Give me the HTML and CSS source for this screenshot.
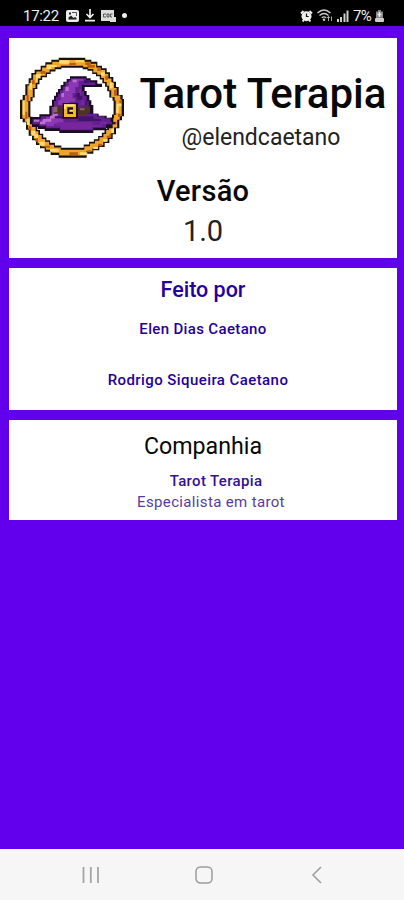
FILE: index.html
```html
<!doctype html>
<html lang="pt-BR">
	<head>
		<meta charset="utf-8" />
		<title>Tarot Terapia</title>
		<meta name="viewport" content="width=device-width,initial-scale=1.0" />
		<link rel="stylesheet" href="styles.css">
	</head>
	<body>
		<div class="status">
			<div class="status-left">
				<span class="time">17:22</span>
				<svg width="13" height="12" viewBox="0 0 13 12"><rect width="13" height="12" rx="2" fill="#eee"/><path d="M2.5 9.5V7.5L5 5.5L7.5 8L9 7L10.5 8V9.5Z" fill="#222"/><rect x="3" y="2.5" width="2" height="2" fill="#222"/><path d="M6 2.5H10.5V6" fill="none" stroke="#555"/></svg>
				<svg width="10" height="13" viewBox="0 0 10 13"><path d="M5 0V8M1.5 5L5 8.5L8.5 5M0 11.7H10" fill="none" stroke="#eee" stroke-width="1.7"/></svg>
				<svg width="15" height="12" viewBox="0 0 15 12"><path d="M0 0H13V7H15V12H9V11H0Z" fill="#ddd"/><path d="M5 4H2.5V7H5M6 4V7H8V4ZM11.5 4H9.5V7H11" fill="none" stroke="#555"/></svg>
				<span class="dot"></span>
			</div>
			<div class="status-right">
				<svg width="13" height="12" viewBox="0 0 13 12"><path d="M1 3.5L3.5 1M12 3.5L9.5 1M2.5 11.5L4 10M10.5 11.5L9 10" stroke="#eee" stroke-width="1.8"/><circle cx="6.5" cy="6.3" r="5" fill="#eee"/><path d="M6.5 3.5V6.5H8.7" fill="none" stroke="#111" stroke-width="1.2"/></svg>
				<svg width="16" height="13" viewBox="0 0 16 13"><path d="M0.5 4Q7 -2 13.5 4M2.5 6.5Q7 2.5 11.5 6.5M4.8 8.7Q7 7 9.2 8.7" fill="none" stroke="#ccc" stroke-width="1.4"/><circle cx="7" cy="10.7" r="1.2" fill="#ccc"/><path d="M11.5 12V7.5M9.8 9.2L11.5 7.3L13 9M14.5 7.5V12" fill="none" stroke="#aaa"/></svg>
				<svg width="12" height="12" viewBox="0 0 12 12"><path d="M1 12V9M4 12V7M7.5 12V3.5M10.5 12V0.5" stroke="#ccc" stroke-width="2"/></svg>
				<span class="battery">7%</span>
				<svg width="9" height="12" viewBox="0 0 9 12"><path d="M3 0H6V1.5H8V8H1V1.5H3Z" fill="#888"/><path d="M4.5 2V7M2.5 4.5H6.5" fill="none" stroke="#eee" stroke-width="1.4"/><rect x="0" y="8" width="9" height="4" rx="1" fill="#ccc"/></svg>
			</div>
		</div>
		<main class="content">
			<section class="card about">
				<div class="brand">
					<svg class="logo" width="104" height="102" viewBox="30 36 312 306">
						<defs>
							<path id="ring" d="M146 38H226V44H244V50H262V62H276V70H290V82H300V96H310V110H318V126H326V150H338V162H342V214H336V226H328V250H318V268H308V282H298V294H284V306H268V316H250V326H230V338H146V330H122V320H104V310H90V300H78V286H66V272H56V254H48V232H38V222H30V164H38V150H46V118H56V100H64V84H74V74H92V62H106V52H124V44H146Z"/>
						</defs>
						<!-- anel -->
						<use href="#ring" fill="#17100d"/>
						<use href="#ring" fill="#eda52f" transform="translate(186 188) scale(.955) translate(-186 -188)"/>
						<path fill="#ffdc72" d="M148 46H178V56H148ZM196 46H222V52H196ZM110 60H140V66H124V72H110ZM78 88H94V100H84V110H78ZM58 114H66V134H58ZM38 168H44V210H38ZM50 222H58V240H50ZM64 258H76V268H84V280H74V272H64ZM88 290H104V302H88ZM120 312H146V320H120ZM210 322H232V330H210ZM250 306H264V312H250ZM280 282H292V290H280ZM304 250H312V264H304ZM320 176H334V184H326V204H318ZM300 112H308V130H300ZM272 82H284V92H272Z"/>
						<path fill="#bd5b19" d="M178 54H198V60H178ZM226 52H242V60H254V68H232V60H226ZM262 70H272V78H262ZM286 92H294V104H286ZM312 134H320V152H312ZM328 166H334V174H328ZM324 206H332V216H324ZM308 230H320V238H308ZM298 266H304V278H290V272H298ZM264 296H276V304H264ZM232 316H244V322H232ZM178 322H204V330H178ZM104 302H120V308H104ZM76 280H84V290H76ZM56 244H64V256H56ZM46 200H52V222H46ZM50 150H56V170H50ZM66 106H74V118H66ZM92 78H106V86H92Z"/>
						<use href="#ring" fill="#17100d" transform="translate(186 188) scale(.84) translate(-186 -188)"/>
						<use href="#ring" fill="#fff" transform="translate(186 188) scale(.8) translate(-186 -188)"/>
						<!-- chapéu -->
						<path fill="#1b0b23" d="M180 94H230V100H242V106H262V116H276V126H224V138H230V150H238V166H244V180H250V206H266V212H290V218H310V232H316V238H308V250H288V256H250V264H148V258H104V252H84V246H66V238H60V216H88V208H118V182H126V164H132V152H138V142H144V132H152V120H160V110H170V102H180Z"/>
						<path fill="#61208d" d="M182 100H228V106H240V112H256V120H216V138H222V152H230V168H236V206H262V214H284V220H302V230H306V238H288V248H250V256H150V250H108V244H88V238H68V222H92V214H124V186H132V168H138V156H144V146H150V136H158V124H166V112H176V106H182Z"/>
						<path fill="#8c38b4" d="M184 102H220V108H206V126H196V144H188V160H196V170H178V180H144V166H152V150H160V136H168V122H176V110H184ZM124 210H140V220H160V236H132V244H110V238H92V226H108V216H124Z"/>
						<path fill="#bd70d2" d="M188 104H200V112H188ZM166 126H176V138H166ZM154 144H162V156H154ZM134 184H144V212H136V220H124V230H106V238H90V230H98V222H120V212H128V186H134ZM72 224H88V230H72Z"/>
						<path fill="#7825a0" d="M142 232H248V240H270V230H292V238H276V246H246V252H152V244H136V238H142ZM206 132H214V156H206ZM212 166H222V180H212Z"/>
						<path fill="#421467" d="M222 106H238V114H222ZM200 144H210V152H216V164H202V156H196V150H200ZM226 168H232V182H226ZM134 214H250V222H272V228H204V222H154V220H134Z"/>
						<path fill="#4f302b" d="M130 184H154V190H216V184H240V204H232V210H154V206H130Z"/>
						<path fill="#8b6660" d="M130 186H142V202H130ZM210 190H224V196H210Z"/>
						<path fill="#21120e" d="M158 174H204V220H158Z"/>
						<path fill="#f1b72d" fill-rule="evenodd" d="M162 178H198V216H162ZM172 187V207H189V187Z"/>
						<path fill="#ffe477" d="M162 178H194V184H168V192H162ZM178 194H189V200H178Z"/>
					</svg>
					<div class="brand-text">
						<h1 class="title">Tarot Terapia</h1>
						<p class="handle">@elendcaetano</p>
					</div>
				</div>
				<h2 class="version-label">Versão</h2>
				<p class="version">1.0</p>
			</section>
			<section class="card authors">
				<h2 class="authors-label">Feito por</h2>
				<p class="name name-elen">Elen Dias Caetano</p>
				<p class="name name-rodrigo">Rodrigo Siqueira Caetano</p>
			</section>
			<section class="card company">
				<h2 class="company-label">Companhia</h2>
				<p class="name company-name">Tarot Terapia</p>
				<p class="company-text">Especialista em tarot</p>
			</section>
		</main>
		<nav class="navbar">
			<svg width="18" height="18" viewBox="0 0 18 18"><path d="M1.5 1V17M8.8 1V17M16 1V17" stroke="#a5a5a5" stroke-width="1.8"/></svg>
			<svg width="18" height="18" viewBox="0 0 18 18"><rect x="1" y="1" width="16" height="16" rx="4.5" fill="none" stroke="#9c9c9c" stroke-width="1.5"/></svg>
			<svg width="18" height="18" viewBox="0 0 18 18"><path d="M13 1L5 9L13 17" fill="none" stroke="#9c9c9c" stroke-width="1.5"/></svg>
		</nav>
	</body>
</html>
```
FILE: styles.css
```css
*{
	margin:0;
	padding:0;
	box-sizing:border-box;
}
body{
	display:flex;
	flex-direction:column;
	width:404px;
	height:900px;
	overflow:hidden;
	background-color:#6200ee;
	font-family:Roboto,"Liberation Sans",sans-serif;
	color:#080808;
}
svg{
	display:block;
	flex:none;
}
h1,h2{
	font-weight:500;
}
.status{
	display:flex;
	justify-content:space-between;
	height:26px;
	padding:5px 20px 0 23px;
	background-color:#000;
	color:#eee;
}
.status-left,.status-right{
	display:flex;
	align-items:center;
	height:21px;
}
.status-left{
	gap:6px;
}
.status-right{
	gap:4px;
}
.time{
	width:37px;
	font-size:15px;
	letter-spacing:-0.3px;
}
.battery{
	width:18px;
	font-size:15px;
	letter-spacing:-0.8px;
}
.dot{
	width:5px;
	height:5px;
	border-radius:50%;
	background-color:#eee;
}
.content{
	flex:1;
	display:flex;
	flex-direction:column;
	gap:10px;
	padding:12px 7px 0 9px;
}
.card{
	background-color:#fff;
	text-align:center;
}
.about{
	height:220px;
	padding-top:19px;
}
.brand{
	display:flex;
	padding-left:11px;
}
.brand-text{
	width:276px;
}
.title{
	padding:11px 0 0 5px;
	font-size:42px;
	line-height:52px;
	white-space:nowrap;
}
.handle{
	padding:1px 0 0 1px;
	font-size:23px;
	line-height:34px;
	color:#222;
}
.version-label{
	margin-top:12px;
	font-size:29px;
	line-height:40px;
	letter-spacing:0.3px;
}
.version{
	font-size:29px;
	line-height:40px;
	color:#222;
}
.authors{
	height:142px;
	padding-top:7px;
	color:#25009c;
}
.authors-label{
	font-size:21.5px;
	line-height:30px;
}
.name{
	font-size:15px;
	font-weight:500;
	line-height:20px;
	letter-spacing:0.35px;
}
.name-elen{
	margin-top:14px;
}
.name-rodrigo{
	margin-top:31px;
	padding-right:10px;
	letter-spacing:0.42px;
}
.company{
	height:100px;
	padding-top:10px;
}
.company-label{
	font-size:23.2px;
	font-weight:400;
	line-height:32px;
}
.company-name{
	margin-top:9px;
	padding-left:26px;
	color:#35109a;
}
.company-text{
	padding-left:16px;
	font-size:15px;
	line-height:22px;
	letter-spacing:0.35px;
	color:#583b9e;
}
.navbar{
	display:flex;
	justify-content:space-between;
	height:51px;
	padding:17px 78px 0 82px;
	background-color:#f6f6f6;
}
```
